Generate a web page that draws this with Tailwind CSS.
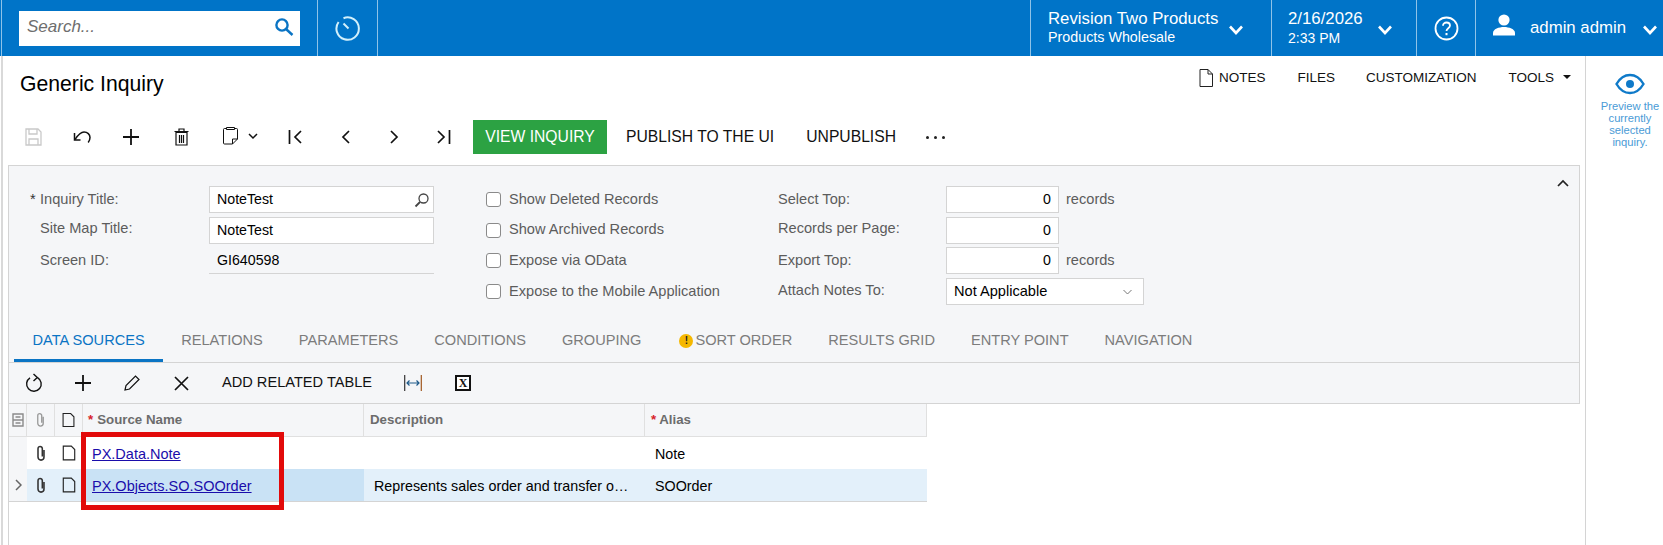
<!DOCTYPE html>
<html lang="en">
<head>
  <meta charset="UTF-8">
  <title>Generic Inquiry</title>
  <script src="https://cdn.jsdelivr.net/npm/@tailwindcss/browser@4"></script>
</head>
<body class="w-[1663px] h-[545px] overflow-hidden bg-white font-['Liberation_Sans',Arial,sans-serif] text-[14.6px] text-black">
  <!-- Top bar -->
  <header class="flex h-[56px] bg-[#0074c8] text-white">
    <div class="w-[2px] border-r border-[#8fc3e8]"></div>
    <div class="w-[316px] border-r border-[#8fc3e8] pl-[17px] pt-[11px]">
      <div class="flex items-center justify-between w-[281px] h-[35px] bg-white pl-[8px] pr-[5px]">
        <span class="italic text-[17px] text-[#6e6e6e] mb-[3px]">Search...</span>
        <svg class="w-[22px] h-[22px] mb-[3px]" viewBox="0 0 22 22" fill="none" stroke="#0a74c4" stroke-width="2.4"><circle cx="9" cy="9" r="5.6"/><path d="M13 13l6.5 6"/></svg>
      </div>
    </div>
    <div class="flex items-center justify-center w-[60px] border-r border-[#8fc3e8]">
      <svg class="w-[28px] h-[28px] mb-[1px]" viewBox="0 0 28 28" fill="none" stroke="#d2f0fb" stroke-width="2"><path d="M9.5 4.2A11.2 11.2 0 1 1 4.6 8"/><path d="M9.5 9.5l5 5"/></svg>
    </div>
    <div class="w-[653px] border-r border-[#8fc3e8]"></div>
    <div class="flex w-[241px] border-r border-[#8fc3e8] pl-[17px] items-center">
      <div class="w-[172px] mr-[8px]">
        <div class="text-[16.8px] leading-[19px] whitespace-nowrap">Revision Two Products</div>
        <div class="text-[14.3px] leading-[19px] whitespace-nowrap">Products Wholesale</div>
      </div>
      <svg class="w-[16px] h-[12px] mt-[4px]" viewBox="0 0 16 12" fill="none" stroke="white" stroke-width="2.6"><path d="M2 2.5l6 6.5 6-6.5"/></svg>
    </div>
    <div class="flex w-[145px] border-r border-[#8fc3e8] pl-[16px] items-center">
      <div class="w-[89px]">
        <div class="text-[16.8px] leading-[19px] mb-[1px]">2/16/2026</div>
        <div class="text-[14px] leading-[19px]">2:33 PM</div>
      </div>
      <svg class="w-[16px] h-[12px] mt-[4px]" viewBox="0 0 16 12" fill="none" stroke="white" stroke-width="2.6"><path d="M2 2.5l6 6.5 6-6.5"/></svg>
    </div>
    <div class="flex items-center justify-center w-[59px] border-r border-[#8fc3e8]">
      <svg class="w-[25px] h-[25px]" viewBox="0 0 25 25" fill="none" stroke="white" stroke-width="1.8"><circle cx="12.5" cy="12.5" r="11"/><path d="M9 9.8c0-2 1.6-3.3 3.5-3.3s3.5 1.3 3.5 3.1c0 2.6-3.5 2.7-3.5 5.4"/><path d="M12.5 17v2.2" stroke-width="2"/></svg>
    </div>
    <div class="flex items-center flex-1 pl-[16px]">
      <svg class="w-[24px] h-[22px] mb-[6px]" viewBox="0 0 24 22" fill="white"><circle cx="12" cy="6" r="5.6"/><path d="M1 21.5v-2.5c0-4 6-6 11-6s11 2 11 6v2.5z"/></svg>
      <span class="ml-[14px] text-[16.8px] whitespace-nowrap">admin admin</span>
      <svg class="w-[16px] h-[12px] ml-[16px] mt-[3px]" viewBox="0 0 16 12" fill="none" stroke="white" stroke-width="2.6"><path d="M2 2.5l6 6.5 6-6.5"/></svg>
    </div>
  </header>

  <div class="flex h-[489px]">
    <!-- Main column -->
    <main class="w-[1585px] border-l-2 border-[#d9d9d9] ml-[1px] shrink-0">
      <div class="flex items-start h-[50px] pl-[17px]">
        <h1 class="text-[21.2px] leading-[24px] mt-[16px]">Generic Inquiry</h1>
        <div class="flex items-center ml-auto mt-[12px] text-[13.5px] leading-[20px] text-[#111] pr-[15px]">
          <svg class="w-[14px] h-[18px] mr-[6px]" viewBox="0 0 14 18" fill="none" stroke="#222" stroke-width="1"><path d="M1 .5h8l4.5 4.5v12.5H1z"/><path d="M9 .5V5h4.5"/></svg>
          <span>NOTES</span>
          <span class="ml-[32px]">FILES</span>
          <span class="ml-[31px]">CUSTOMIZATION</span>
          <span class="ml-[32px]">TOOLS</span>
          <span class="ml-[9px] mb-[2px] border-x-[4px] border-t-[4px] border-x-transparent border-t-[#111]"></span>
        </div>
      </div>

      <!-- Main toolbar -->
      <div class="flex items-center h-[34px] mt-[14px] pl-[18px]">
        <div class="flex items-center justify-center w-[24px]">
          <svg class="w-[17px] h-[18px]" viewBox="0 0 17 18" fill="none" stroke="#c9c9c9" stroke-width="1.3"><path d="M1 1h12l3 3v13H1z"/><path d="M4 1v5h8V1M4 17v-6h9v6"/></svg>
        </div>
        <div class="flex items-center justify-center w-[24px] ml-[25px]">
          <svg class="w-[19px] h-[14px]" viewBox="0 0 19 14" fill="none" stroke="#111" stroke-width="1.5"><path d="M1.5 3v7h6"/><path d="M2 9.5C5 5 7.5 2 11 2c3.5 0 6 2.5 6 5.5 0 2-.7 3.5-1.8 5"/></svg>
        </div>
        <div class="flex items-center justify-center w-[24px] ml-[25px]">
          <svg class="w-[18px] h-[18px]" viewBox="0 0 18 18" stroke="#111" stroke-width="1.8"><path d="M9 1v16M1 9h16"/></svg>
        </div>
        <div class="flex items-center justify-center w-[24px] ml-[26px]">
          <svg class="w-[15px] h-[18px]" viewBox="0 0 15 18" fill="none" stroke="#111" stroke-width="1.2"><path d="M2 4.5h11V17H2zM.5 3.5h14M5 3V1h5v2"/><path d="M5.5 7v8M7.5 7v8M9.5 7v8"/></svg>
        </div>
        <div class="flex items-center justify-center w-[24px] ml-[25px]">
          <svg class="w-[15px] h-[19px] mb-[3px]" viewBox="0 0 15 19" fill="none" stroke="#111" stroke-width="1"><path d="M3.5 2.5H1.5a1 1 0 0 0-1 1V17a1 1 0 0 0 1 1h8l5-5V3.5a1 1 0 0 0-1-1h-2"/><path d="M3.5 3.5V1.5h8v2z"/><path d="M9.5 18v-5h5"/></svg>
        </div>
        <svg class="w-[10px] h-[7px] ml-[6px] mb-[2px]" viewBox="0 0 10 7" fill="none" stroke="#111" stroke-width="1.5"><path d="M1 1l4 4 4-4"/></svg>
        <div class="flex items-center justify-center w-[24px] ml-[25px]">
          <svg class="w-[14px] h-[14px]" viewBox="0 0 14 14" fill="none" stroke="#111" stroke-width="1.7"><path d="M1.5 0v14M13 1L7 7l6 6"/></svg>
        </div>
        <div class="flex items-center justify-center w-[24px] ml-[26px]">
          <svg class="w-[9px] h-[14px]" viewBox="0 0 9 14" fill="none" stroke="#111" stroke-width="1.7"><path d="M8 1L2 7l6 6"/></svg>
        </div>
        <div class="flex items-center justify-center w-[24px] ml-[25px]">
          <svg class="w-[9px] h-[14px]" viewBox="0 0 9 14" fill="none" stroke="#111" stroke-width="1.7"><path d="M1 1l6 6-6 6"/></svg>
        </div>
        <div class="flex items-center justify-center w-[24px] ml-[26px]">
          <svg class="w-[14px] h-[14px]" viewBox="0 0 14 14" fill="none" stroke="#111" stroke-width="1.7"><path d="M12.5 0v14M1 1l6 6-6 6"/></svg>
        </div>
        <button class="h-[34px] w-[134px] ml-[17px] bg-[#2ca243] text-white text-[15.7px] whitespace-nowrap">VIEW INQUIRY</button>
        <span class="ml-[19px] text-[15.7px] text-[#111] whitespace-nowrap">PUBLISH TO THE UI</span>
        <span class="ml-[32px] text-[15.7px] text-[#111]">UNPUBLISH</span>
        <div class="flex gap-[5px] ml-[30px]">
          <span class="w-[3px] h-[3px] rounded-full bg-[#222]"></span>
          <span class="w-[3px] h-[3px] rounded-full bg-[#222]"></span>
          <span class="w-[3px] h-[3px] rounded-full bg-[#222]"></span>
        </div>
      </div>

      <!-- Form + tabs -->
      <section class="mt-[11px] ml-[5px] w-[1572px] border-x border-t border-[#d4d4d4]">
        <div class="relative flex h-[156px] pt-[20px] bg-[#f5f6f8] text-[#5c5c5c]">
          <svg class="absolute right-[10px] top-[13px] w-[12px] h-[8px]" viewBox="0 0 12 8" fill="none" stroke="#222" stroke-width="1.7"><path d="M1 7l5-5 5 5"/></svg>
          <div class="w-[477px] pl-[21px] grid grid-rows-[27px_27px_27px] gap-y-[3.7px] content-start shrink-0">
            <div class="flex items-center">
              <span class="w-[10px] text-[#333]">*</span><span class="w-[169px]">Inquiry Title:</span>
              <div class="flex items-center justify-between w-[225px] h-[27px] bg-white border border-[#d4d4d4] pl-[7px] pr-[3px] text-black text-[14.2px]">NoteTest
                <svg class="w-[16px] h-[16px]" viewBox="0 0 16 16" fill="none" stroke="#444" stroke-width="1.3"><circle cx="9.5" cy="6.5" r="4.5"/><path d="M6 10l-4.5 4.5" stroke-width="1.8"/></svg>
              </div>
            </div>
            <div class="flex items-center">
              <span class="w-[10px]"></span><span class="w-[169px] mb-[2px]">Site Map Title:</span>
              <div class="flex items-center w-[225px] h-[27px] bg-white border border-[#d4d4d4] pl-[7px] text-black text-[14.2px]">NoteTest</div>
            </div>
            <div class="flex items-center">
              <span class="w-[10px]"></span><span class="w-[169px]">Screen ID:</span>
              <div class="flex items-center w-[225px] h-[27px] border-b border-[#d4d4d4] pl-[8px] text-black text-[14.2px]">GI640598</div>
            </div>
          </div>
          <div class="w-[292px] grid grid-rows-[27px_27px_27px_27px] gap-y-[3.7px] content-start shrink-0">
            <div class="flex items-center"><span class="w-[15px] h-[15px] rounded-[3px] border border-[#8a8a8a] bg-white mr-[8px]"></span>Show Deleted Records</div>
            <div class="flex items-center"><span class="w-[15px] h-[15px] rounded-[3px] border border-[#8a8a8a] bg-white mr-[8px]"></span>Show Archived Records</div>
            <div class="flex items-center"><span class="w-[15px] h-[15px] rounded-[3px] border border-[#8a8a8a] bg-white mr-[8px]"></span>Expose via OData</div>
            <div class="flex items-center"><span class="w-[15px] h-[15px] rounded-[3px] border border-[#8a8a8a] bg-white mr-[8px]"></span>Expose to the Mobile Application</div>
          </div>
          <div class="grid grid-rows-[27px_27px_27px_27px] gap-y-[3.7px] content-start">
            <div class="flex items-center"><span class="w-[168px]">Select Top:</span>
              <div class="flex items-center justify-end w-[113px] h-[27px] bg-white border border-[#d4d4d4] pr-[7px] text-black text-[14.2px]">0</div><span class="ml-[7px]">records</span></div>
            <div class="flex items-center"><span class="w-[168px] mb-[2px]">Records per Page:</span>
              <div class="flex items-center justify-end w-[113px] h-[27px] bg-white border border-[#d4d4d4] pr-[7px] text-black text-[14.2px]">0</div></div>
            <div class="flex items-center"><span class="w-[168px]">Export Top:</span>
              <div class="flex items-center justify-end w-[113px] h-[27px] bg-white border border-[#d4d4d4] pr-[7px] text-black text-[14.2px]">0</div><span class="ml-[7px]">records</span></div>
            <div class="flex items-center"><span class="w-[168px] mb-[2px]">Attach Notes To:</span>
              <div class="flex items-center justify-between w-[198px] h-[27px] bg-white border border-[#d4d4d4] pl-[7px] pr-[11px] text-black">Not Applicable
                <svg class="w-[9px] h-[6px]" viewBox="0 0 9 6" fill="none" stroke="#777" stroke-width="1"><path d="M.5 1l4 4 4-4"/></svg>
              </div></div>
          </div>
        </div>

        <!-- Tabs -->
        <div class="flex h-[41px] pl-[5px] bg-[#f5f6f8] border-b border-[#d4d4d4] text-[#7c7c7c] whitespace-nowrap">
          <div class="flex items-center h-[40px] px-[18.5px] border-b-[3px] border-[#0a74c4] text-[#0a74c4]">DATA SOURCES</div>
          <div class="flex items-center h-[40px] px-[18px] pb-[3px]">RELATIONS</div>
          <div class="flex items-center h-[40px] px-[18px] pb-[3px]">PARAMETERS</div>
          <div class="flex items-center h-[40px] px-[18px] pb-[3px]">CONDITIONS</div>
          <div class="flex items-center h-[40px] pl-[18px] pr-[20px] pb-[3px]">GROUPING</div>
          <div class="flex items-center h-[40px] px-[18px] pb-[3px]">
            <span class="flex items-center justify-center w-[14px] h-[14px] rounded-full bg-[#f5b800] text-[10px] font-bold text-[#222] mr-[2px]">!</span>SORT ORDER
          </div>
          <div class="flex items-center h-[40px] px-[18px] pb-[3px]">RESULTS GRID</div>
          <div class="flex items-center h-[40px] px-[18px] pb-[3px]">ENTRY POINT</div>
          <div class="flex items-center h-[40px] px-[18px] pb-[3px]">NAVIGATION</div>
        </div>

        <!-- Grid toolbar -->
        <div class="flex items-center h-[41px] bg-[#f5f6f8] border-b border-[#d4d4d4] text-[#111] pl-[16px]">
          <svg class="w-[18px] h-[20px]" viewBox="0 0 18 20" fill="none" stroke="#111" stroke-width="1.4"><path d="M5 4.8a7.3 7.3 0 1 0 7.5-.2"/><path d="M8.5 1l3.8 3.5-3.800 3.500"/></svg>
          <svg class="w-[18px] h-[18px] ml-[31px]" viewBox="0 0 18 18" stroke="#111" stroke-width="1.8"><path d="M9 1v16M1 9h16"/></svg>
          <svg class="w-[16px] h-[16px] ml-[32px]" viewBox="0 0 16 16" fill="none" stroke="#111" stroke-width="1.2"><path d="M1 15l1-4.5L11.5 1 15 4.500 5.500 14z"/></svg>
          <svg class="w-[15px] h-[15px] ml-[34px]" viewBox="0 0 15 15" stroke="#111" stroke-width="1.7"><path d="M1 1l13 13M14 1L1 14"/></svg>
          <span class="ml-[33px] text-[14.6px] whitespace-nowrap">ADD RELATED TABLE</span>
          <svg class="w-[18px] h-[16px] ml-[32px]" viewBox="0 0 18 16" fill="none" stroke-width="1.2"><path d="M.7 0v16" stroke="#333"/><path d="M17.3 0v16" stroke="#a0561e"/><path d="M3 8h12M5.5 5.5L3 8l2.5 2.5M12.5 5.5L15 8l-2.5 2.5" stroke="#1e5a8a"/></svg>
          <div class="flex items-center justify-center w-[16px] h-[16px] ml-[33px] border-2 border-[#111] bg-white text-[12px] font-bold leading-none font-['Liberation_Serif',serif]">X</div>
        </div>
      </section>

      <!-- Data grid -->
      <section class="relative ml-[5px] h-[141px] border-l border-[#d4d4d4]">
        <div class="grid grid-cols-[18px_28px_28px_281px_281px_282px] w-[918px] grid-rows-[33px_32px_33px]">
          <div class="flex items-center justify-center bg-[#f5f6f8] border-r border-b border-[#e0e0e0]">
            <svg class="w-[12px] h-[14px]" viewBox="0 0 12 14" fill="none" stroke="#8a8a8a" stroke-width="1.4"><path d="M1 1h10v12H1zM1 7h10M3.5 4h5M3.5 10h5"/></svg>
          </div>
          <div class="flex items-center justify-center bg-[#f5f6f8] border-r border-b border-[#e0e0e0]">
            <svg class="w-[11px] h-[16px]" viewBox="0 0 10 14" fill="none" stroke="#9a9a9a" stroke-width="1.2"><path d="M7.5 4v6a2.5 2.5 0 0 1-5 0V3a1.8 1.8 0 0 1 3.6 0v6.5"/></svg>
          </div>
          <div class="flex items-center justify-center bg-[#f5f6f8] border-r border-b border-[#e0e0e0]">
            <svg class="w-[13px] h-[16px]" viewBox="0 0 12 14" fill="none" stroke="#222" stroke-width="1"><path d="M1 1h7l3 3v9H1z"/></svg>
          </div>
          <div class="flex items-center pl-[5px] bg-[#f5f6f8] border-r border-b border-[#e0e0e0] text-[13.3px] font-bold text-[#6c6c6c]"><span class="text-[#d7232b] mr-[4px]">*</span>Source Name</div>
          <div class="flex items-center pl-[6px] bg-[#f5f6f8] border-r border-b border-[#e0e0e0] text-[13.3px] font-bold text-[#6c6c6c]">Description</div>
          <div class="flex items-center pl-[6px] bg-[#f5f6f8] border-r border-b border-[#e0e0e0] text-[13.3px] font-bold text-[#6c6c6c]"><span class="text-[#d7232b] mr-[3px]">*</span>Alias</div>

          <div class="bg-[#f5f6f8]"></div>
          <div class="flex items-center justify-center">
            <svg class="w-[12px] h-[17px]" viewBox="0 0 10 14" fill="none" stroke="#333" stroke-width="1.3"><path d="M7.5 4v6a2.5 2.5 0 0 1-5 0V3a1.8 1.8 0 0 1 3.6 0v6.5"/></svg>
          </div>
          <div class="flex items-center justify-center">
            <svg class="w-[14px] h-[16px]" viewBox="0 0 12 14" fill="none" stroke="#222" stroke-width="1"><path d="M1 1h7l3 3v9H1z"/></svg>
          </div>
          <div class="flex items-center pl-[9px] pt-[3px] text-[14.5px]"><a class="text-[#1a0dab] underline">PX.Data.Note</a></div>
          <div></div>
          <div class="flex items-center pl-[10px] pt-[3px] text-[14.3px]">Note</div>

          <div class="flex items-center justify-center bg-[#f5f6f8] border-b border-[#d4d4d4]">
            <svg class="w-[7px] h-[12px]" viewBox="0 0 7 12" fill="none" stroke="#666" stroke-width="1.5"><path d="M1 1l5 5-5 5"/></svg>
          </div>
          <div class="flex items-center justify-center bg-[#e3f0fa] border-b border-[#d4d4d4]">
            <svg class="w-[12px] h-[17px]" viewBox="0 0 10 14" fill="none" stroke="#333" stroke-width="1.3"><path d="M7.5 4v6a2.5 2.5 0 0 1-5 0V3a1.8 1.8 0 0 1 3.6 0v6.5"/></svg>
          </div>
          <div class="flex items-center justify-center bg-[#e3f0fa] border-b border-[#d4d4d4]">
            <svg class="w-[14px] h-[16px]" viewBox="0 0 12 14" fill="none" stroke="#222" stroke-width="1"><path d="M1 1h7l3 3v9H1z"/></svg>
          </div>
          <div class="flex items-center pl-[9px] pt-[3px] bg-[#c9e2f5] border-b border-[#d4d4d4] text-[14.5px]"><a class="text-[#1a0dab] underline">PX.Objects.SO.SOOrder</a></div>
          <div class="flex items-center pl-[10px] pt-[3px] bg-[#e3f0fa] border-b border-[#d4d4d4] text-[14.3px] whitespace-nowrap">Represents sales order and transfer o…</div>
          <div class="flex items-center pl-[10px] pt-[3px] bg-[#e3f0fa] border-b border-[#d4d4d4] text-[14.3px]">SOOrder</div>
        </div>
        <!-- Annotation drawn over the grid -->
        <div class="absolute left-[72px] top-[28px] w-[203px] h-[78px] border-[5px] border-[#e20a0a]"></div>
      </section>
    </main>

    <!-- Side panel -->
    <aside class="flex-1 border-l border-[#d4d4d4] flex flex-col items-center pt-[17px] pl-[11px] ml-[-1px]">
      <svg class="w-[30px] h-[22px]" viewBox="0 0 30 22" fill="none" stroke="#0f7ac9" stroke-width="2.4"><path d="M1.5 11C5 5 10 2 15 2s10 3 13.5 9C25 17 20 20 15 20S5 17 1.5 11z"/><circle cx="15" cy="11" r="4" fill="#0f7ac9" stroke="none"/></svg>
      <p class="mt-[5px] text-center text-[11.2px] leading-[12px] text-[#4a9bd6] whitespace-nowrap">Preview the<br>currently<br>selected<br>inquiry.</p>
    </aside>
  </div>
</body>
</html>
